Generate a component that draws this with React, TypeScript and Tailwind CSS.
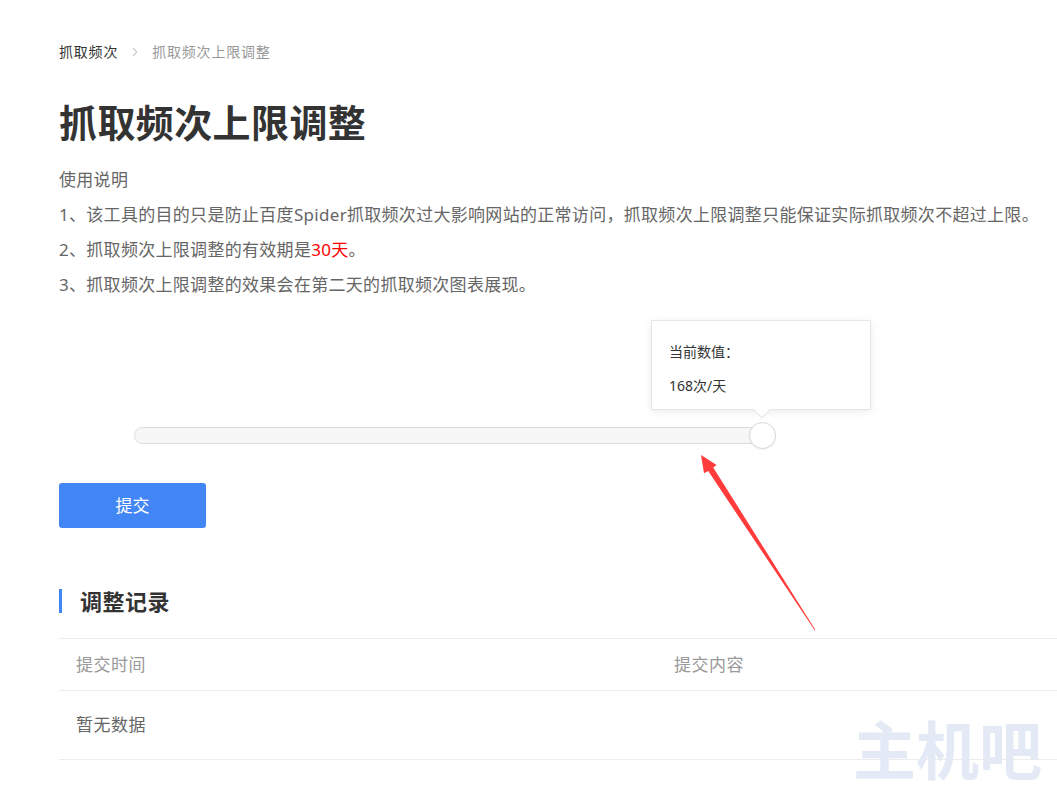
import React from "react";
import { ChevronRight } from "lucide-react";

export default function App() {
  const font = { fontFamily: '"Noto Sans", "Noto Sans CJK SC", sans-serif' };
  return (
    <div
      className="relative min-h-[795px] w-full overflow-hidden bg-white text-[#666]"
      style={font}
    >
      <div className="pl-[59px] pt-[42px]">
        {/* breadcrumb */}
        <div className="flex h-[20px] items-center text-[14px] leading-[20px] tracking-[0.8px]">
          <span className="text-[#333]">抓取频次</span>
          <ChevronRight className="mx-[10px] h-[14px] w-[14px] text-[#999]" strokeWidth={1.5} />
          <span className="text-[#999]">抓取频次上限调整</span>
        </div>

        {/* title */}
        <h1 className="mt-[37px] h-[46px] text-[38px] font-bold leading-[46px] tracking-[0.4px] text-[#333]">
          抓取频次上限调整
        </h1>

        {/* description */}
        <div className="mt-[17px] whitespace-nowrap text-[17px] leading-[35px] tracking-[0.3px] text-[#666]">
          <p>使用说明</p>
          <p>1、该工具的目的只是防止百度Spider抓取频次过大影响网站的正常访问，抓取频次上限调整只能保证实际抓取频次不超过上限。</p>
          <p>
            2、抓取频次上限调整的有效期是<span className="text-[#ff0000]">30天</span>。
          </p>
          <p>3、抓取频次上限调整的效果会在第二天的抓取频次图表展现。</p>
        </div>

        {/* slider */}
        <div className="mt-[18px] flex flex-col">
          <div className="relative ml-[592px] h-[90px] w-[220px] border border-[#e6e6e6] bg-white pl-[17px] pt-[14px] text-[14px] leading-[34px] text-[#333] shadow-[0_2px_8px_rgba(0,0,0,0.08)]">
            <p>当前数值：</p>
            <p>168次/天</p>
            <div className="absolute bottom-[-7px] left-[104px] h-[12px] w-[12px] rotate-45 border-b border-r border-[#e6e6e6] bg-white" />
          </div>
          <div className="relative ml-[75px] mt-[17px] h-[17px] w-[636px] rounded-full border border-[#dcdcdc] bg-[#f7f7f7]">
            <div className="absolute left-[614px] top-[-6px] h-[27px] w-[27px] rounded-full border border-[#d6d6d6] bg-white shadow-[0_1px_2px_rgba(0,0,0,0.06)]" />
          </div>
        </div>

        {/* submit */}
        <button className="mt-[39px] flex h-[45px] w-[147px] items-center justify-center rounded-[3px] bg-[#4285f4] text-[17px] text-white">
          提交
        </button>

        {/* section heading */}
        <div className="mt-[61px] flex h-[24px] items-center">
          <div className="h-[24px] w-[3px] bg-[#4285f4]" />
          <span className="ml-[18px] text-[22px] font-bold leading-[24px] tracking-[0.5px] text-[#333]">
            调整记录
          </span>
        </div>

        {/* table */}
        <div className="mt-[25px] border-t border-[#ececec] text-[17px] tracking-[0.5px]">
          <div className="flex h-[52px] items-center border-b border-[#ececec] text-[#999]">
            <div className="w-[615px] pl-[17px]">提交时间</div>
            <div>提交内容</div>
          </div>
          <div className="flex h-[69px] items-center border-b border-[#ececec] text-[#666]">
            <div className="w-[615px] pl-[17px]">暂无数据</div>
          </div>
        </div>
      </div>

      {/* watermark */}
      <div
        className="pointer-events-none absolute left-[853px] top-[715px] w-[200px] whitespace-nowrap text-[63px] font-bold leading-[63px] text-[#e3e9f5]"
        style={{ fontFamily: '"Noto Sans CJK SC", sans-serif' }}
      >
        主机吧
      </div>

      {/* red annotation arrow */}
      <svg
        className="pointer-events-none absolute left-0 top-0"
        width="1057"
        height="795"
        viewBox="0 0 1057 795"
      >
        <polygon
          points="701,455 716.6,465.1 713.2,467.4 815.3,629.8 814.7,630.2 708.2,471.1 704,473.3"
          fill="#ff3b3b"
        />
      </svg>
    </div>
  );
}
